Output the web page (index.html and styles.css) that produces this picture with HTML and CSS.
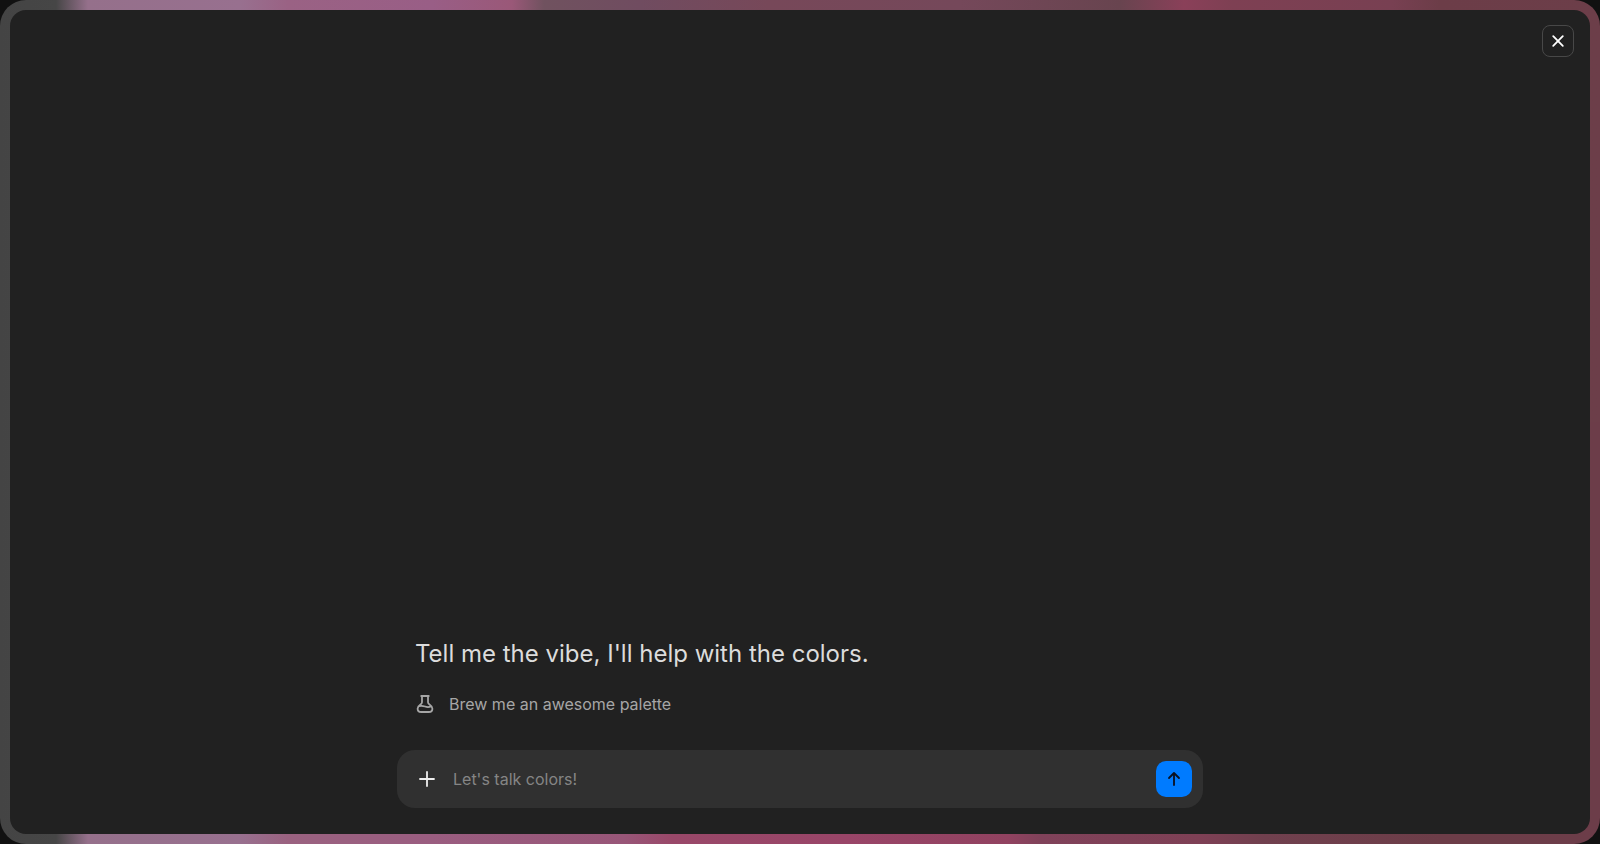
FILE: index.html
```html
<!DOCTYPE html>
<html lang="en">
<head>
  <meta charset="UTF-8" />
  <meta name="viewport" content="width=device-width, initial-scale=1.0" />
  <title>Color chat</title>
  <link rel="stylesheet" href="styles.css">
</head>
<body>
  <div class="frame">
    <main class="panel">
      <header class="top">
        <button class="close" type="button" aria-label="Close">
          <svg width="18" height="18" viewBox="0 0 18 18"><path d="M4.200 4.200l9.600 9.600M13.800 4.200L4.200 13.800" /></svg>
        </button>
      </header>

      <section class="chat">
        <div class="intro">
          <h1>Tell me the vibe, I'll help with the colors.</h1>
          <button class="suggestion" type="button">
            <svg width="20" height="20" viewBox="0 0 20 20"><path d="M6.200 2h7.600M7 2v6.200c0 1-.5 1.600-1.500 2.300-1.900 1.300-2.900 2.500-2.900 4.200 0 2.100 1.400 3.300 3.600 3.300h7.600c2.200 0 3.600-1.200 3.600-3.300 0-1.700-1-2.900-2.900-4.200-1-.7-1.500-1.300-1.500-2.300V2M4 12.300c2-1 4-.5 6 .2s4 .8 6-.1" /></svg>
            Brew me an awesome palette
          </button>
        </div>

        <form class="composer">
          <button class="add" type="button" aria-label="Add">
            <svg width="20" height="20" viewBox="0 0 20 20"><path d="M10 3v14M3 10h14" /></svg>
          </button>
          <input type="text" placeholder="Let's talk colors!" aria-label="Message" autocomplete="off" />
          <button class="send" type="submit" aria-label="Send">
            <svg width="18" height="18" viewBox="0 0 18 18"><path d="M9 15V3M4 8l5-5 5 5" /></svg>
          </button>
        </form>
      </section>
    </main>
  </div>
</body>
</html>
```

FILE: styles.css
```css
:root {
  --bg: #111;
  --panel: #212121;
  --field: #303030;
  --accent: #007bff;
  --title: #dcdcdc;
  --muted: #a6a6a6;
}
* {
  box-sizing: border-box;
  font-family: "Inter", sans-serif;
}
body {
  margin: 0;
  background: var(--bg);
}
button {
  display: flex;
  align-items: center;
  justify-content: center;
  padding: 0;
  border: none;
  background: none;
  cursor: pointer;
}
svg {
  flex: none;
  fill: none;
  stroke: currentColor;
  stroke-width: 1.8;
  stroke-linecap: round;
  stroke-linejoin: round;
}
/* the top and bottom edges carry different colors */
.frame {
  display: flex;
  min-height: 100vh;
  padding: 10px;
  border-radius: 26px;
  background:
    linear-gradient(90deg, #444 0, #464646 3.5%, #95708b 5.5%, #98708f 15%, #9a6284 18%, #995e86 27%, #9a5878 32%, #70525f 34%, #704c60 40%, #774859 48%, #75485a 60%, #68444f 70%, #8a4059 74%, #7e4053 77%, #784052 87%, #6c3d48 90%, #6c3e49 100%) top / 100% 50% no-repeat,
    linear-gradient(90deg, #444 0, #464646 3.5%, #95708b 5.5%, #98708f 15%, #9a6280 18%, #9a5d80 27%, #985678 39%, #994869 42%, #994568 53%, #914260 63%, #80425a 65%, #7e4055 75%, #70404e 79%, #6c3d48 90%, #6c3d49 100%) bottom / 100% 50% no-repeat;
}
.panel {
  flex: 1;
  display: flex;
  flex-direction: column;
  justify-content: space-between;
  padding: 15px 16px 26px;
  border-radius: 16px;
  background: var(--panel);
}
.top {
  display: flex;
  justify-content: flex-end;
}
.close {
  width: 32px;
  height: 32px;
  border: 1px solid #484848;
  border-radius: 8px;
  color: #fff;
}
.chat {
  width: 100%;
  max-width: 806px;
  margin: 0 auto;
}
.intro {
  padding: 0 18px;
  margin-bottom: 34px;
}
h1 {
  margin: 0 0 22px;
  font-size: 24px;
  line-height: 32px;
  font-weight: 400;
  color: var(--title);
}
.suggestion {
  gap: 14px;
  font-size: 16px;
  line-height: 24px;
  color: var(--muted);
}
.composer {
  display: flex;
  align-items: center;
  gap: 16px;
  padding: 11px;
  border-radius: 18px;
  background: var(--field);
}
.add {
  margin-left: 9px;
  color: #eee;
}
.composer input {
  flex: 1;
  min-width: 0;
  padding: 0;
  border: none;
  outline: none;
  background: none;
  font-size: 16px;
  line-height: 24px;
  color: var(--title);
}
.composer input::placeholder {
  color: #858585;
}
.send {
  width: 36px;
  height: 36px;
  border-radius: 10px;
  background: var(--accent);
  color: #0b1020;
}
```
